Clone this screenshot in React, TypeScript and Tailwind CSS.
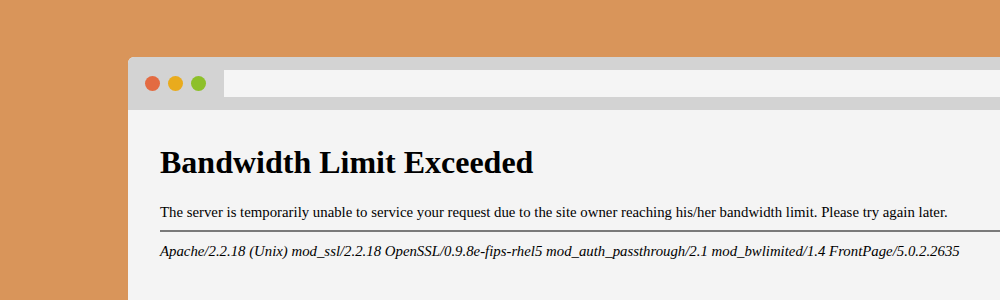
export default function App() {
  return (
    <div className="h-[300px] w-[1000px] overflow-hidden bg-[#d9955a] pl-[128px] pt-[57px]">
      <div className="h-full w-[900px] rounded-tl-[6px] bg-[#f4f4f4] overflow-hidden">
        <div className="flex h-[53px] items-center bg-[#d3d3d3] pl-[17px]">
          <div className="flex gap-[8px]">
            <span className="h-[15px] w-[15px] rounded-full bg-[#e36b42]" />
            <span className="h-[15px] w-[15px] rounded-full bg-[#e9ab1d]" />
            <span className="h-[15px] w-[15px] rounded-full bg-[#8dc02a]" />
          </div>
          <div className="ml-[18px] h-[27px] flex-1 bg-[#f5f5f5]" />
        </div>
        <div className="pl-[32px] pt-[34px] font-['Liberation_Serif',serif] text-black">
          <h1 className="text-[32px] font-bold leading-[36px]">Bandwidth Limit Exceeded</h1>
          <p className="mt-[23px] text-[14.8px] leading-[18px] whitespace-nowrap">
            The server is temporarily unable to service your request due to the site owner reaching his/her bandwidth limit. Please try again later.
          </p>
          <div className="mt-[9px] h-[2px] bg-[#7a7a7a]" />
          <address className="mt-[10px] text-[14.8px] italic leading-[18px] whitespace-nowrap">
            Apache/2.2.18 (Unix) mod_ssl/2.2.18 OpenSSL/0.9.8e-fips-rhel5 mod_auth_passthrough/2.1 mod_bwlimited/1.4 FrontPage/5.0.2.2635
          </address>
        </div>
      </div>
    </div>
  );
}
